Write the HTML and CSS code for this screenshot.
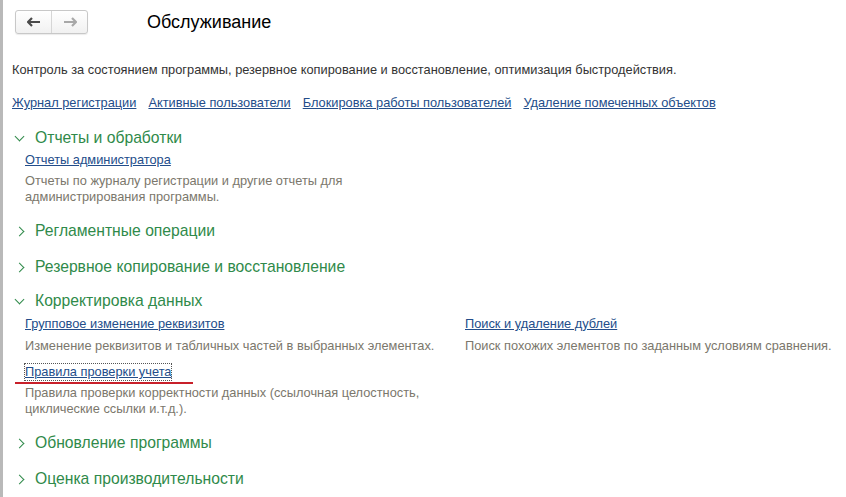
FILE: index.html
```html
<!DOCTYPE html>
<html lang="ru">
<head>
    <meta charset="UTF-8">
    <title>Обслуживание</title>
    <link rel="stylesheet" href="styles.css">
</head>
<body>
<div class="page">
    <div class="topbar">
        <div class="nav">
            <span class="nav-btn">
                <svg width="14" height="10" viewBox="0 0 14 10"><path d="M1 5h12M5 1L1 5l4 4" fill="none" stroke="#4a4a4a" stroke-width="2.2"/></svg>
            </span>
            <span class="nav-btn">
                <svg width="14" height="10" viewBox="0 0 14 10"><path d="M1 5h12M9 1l4 4-4 4" fill="none" stroke="#a8a8a8" stroke-width="2.2"/></svg>
            </span>
        </div>
        <h1>Обслуживание</h1>
    </div>

    <p class="intro">Контроль за состоянием программы, резервное копирование и восстановление, оптимизация быстродействия.</p>

    <div class="links">
        <a href="#">Журнал регистрации</a>
        <a href="#">Активные пользователи</a>
        <a href="#">Блокировка работы пользователей</a>
        <a href="#">Удаление помеченных объектов</a>
    </div>

    <div class="group open first">
        <div class="group-title"><span class="chev down"></span>Отчеты и обработки</div>
        <div class="items">
            <div class="item">
                <a href="#">Отчеты администратора</a>
                <p>Отчеты по журналу регистрации и другие отчеты для<br>администрирования программы.</p>
            </div>
        </div>
    </div>

    <div class="group">
        <div class="group-title"><span class="chev"></span>Регламентные операции</div>
    </div>

    <div class="group">
        <div class="group-title"><span class="chev"></span>Резервное копирование и восстановление</div>
    </div>

    <div class="group open">
        <div class="group-title"><span class="chev down"></span>Корректировка данных</div>
        <div class="items cols">
            <div class="col">
                <div class="item">
                    <a href="#">Групповое изменение реквизитов</a>
                    <p>Изменение реквизитов и табличных частей в выбранных элементах.</p>
                </div>
                <div class="item">
                    <a href="#" class="focused">Правила проверки учета</a>
                    <div class="mark"></div>
                    <p>Правила проверки корректности данных (ссылочная целостность,<br>циклические ссылки и.т.д.).</p>
                </div>
            </div>
            <div class="col">
                <div class="item">
                    <a href="#">Поиск и удаление дублей</a>
                    <p>Поиск похожих элементов по заданным условиям сравнения.</p>
                </div>
            </div>
        </div>
    </div>

    <div class="group">
        <div class="group-title"><span class="chev"></span>Обновление программы</div>
    </div>

    <div class="group">
        <div class="group-title"><span class="chev"></span>Оценка производительности</div>
    </div>
</div>
</body>
</html>
```

FILE: styles.css
```css
body {
    margin: 0;
    background: #fff;
    font-family: 'Liberation Sans', Arial, sans-serif;
    font-size: 12.8px;
    color: #333;
}
.page {
    border-left: 3px solid #b9b9b9;
    min-height: 497px;
    box-sizing: border-box;
    padding: 10px 0 0 9px;
}
.topbar {
    display: flex;
    align-items: center;
    height: 24px;
}
.nav {
    display: flex;
    margin-left: 3px;
    border: 1px solid #c8c8c8;
    border-radius: 3px;
    background: linear-gradient(#ffffff, #f1f1f1);
    box-shadow: 0 1px 1px rgba(0, 0, 0, 0.08);
}
.nav-btn {
    width: 35px;
    height: 22px;
    display: flex;
    align-items: center;
    justify-content: center;
}
.nav-btn + .nav-btn {
    border-left: 1px solid #d6d6d6;
}
h1 {
    font-size: 18px;
    font-weight: normal;
    color: #000;
    margin: 1px 0 0 59px;
}
.intro {
    margin: 28px 0 0 0;
    color: #333;
}
.links {
    display: flex;
    gap: 12px;
    margin-top: 18px;
}
a {
    color: #234d8a;
    text-decoration: underline;
}
.group.first {
    margin-top: 18px;
}
.group + .group {
    margin-top: 16px;
}
.open + .group {
    margin-top: 16px;
}
.group + .open {
    margin-top: 14px;
}
.group-title {
    display: flex;
    align-items: center;
    color: #2f8a4a;
    font-size: 15.7px;
    height: 20px;
}
.chev {
    width: 6px;
    height: 6px;
    border-right: 1.5px solid #2f8a4a;
    border-bottom: 1.5px solid #2f8a4a;
    transform: rotate(-45deg);
    margin: 0 12px 0 4px;
}
.chev.down {
    transform: rotate(45deg);
    margin-top: -4px;
}
.items {
    padding-left: 13px;
    margin-top: 4px;
}
.cols {
    display: grid;
    grid-template-columns: 440px 1fr;
    margin-top: 5px;
}
.item p {
    margin: 5px 0 0;
    color: #7b776c;
    line-height: 16px;
}
.cols .item p {
    margin-top: 6px;
}
.item + .item {
    margin-top: 10px;
}
.item a {
    display: inline-block;
    line-height: 16px;
}
.focused {
    outline: 1px dotted #555;
    outline-offset: 0;
}
.mark {
    width: 178px;
    height: 2px;
    background: #c8202a;
    margin: 2px 0 -5px -10px;
}
```
